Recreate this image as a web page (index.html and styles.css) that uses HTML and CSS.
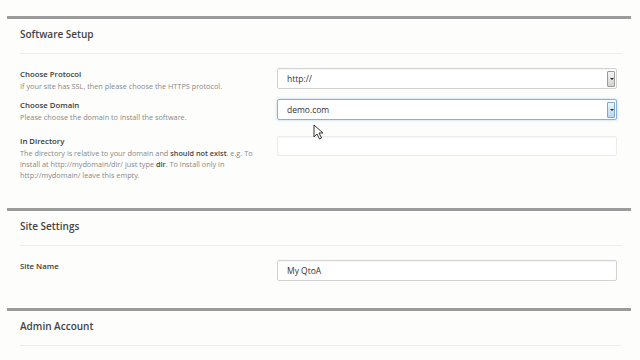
FILE: index.html
```html
<!DOCTYPE html>
<html lang="en">
<head>
  <meta charset="UTF-8">
  <title>Software Setup</title>
  <link rel="stylesheet" href="styles.css">
</head>
<body>
  <div class="wrap">

    <div class="section">
      <h3 class="section-head">Software Setup</h3>
      <div class="fields">
        <div class="row">
          <div class="label">
            <p class="title">Choose Protocol</p>
            <p class="desc">If your site has SSL, then please choose the HTTPS protocol.</p>
          </div>
          <div class="select">
            <span class="value">http://</span>
            <span class="arrow"></span>
          </div>
        </div>
        <div class="row tall">
          <div class="label">
            <p class="title">Choose Domain</p>
            <p class="desc">Please choose the domain to install the software.</p>
          </div>
          <div class="select focus">
            <span class="value">demo.com</span>
            <span class="arrow"></span>
          </div>
        </div>
        <div class="row">
          <div class="label">
            <p class="title">In Directory</p>
            <p class="desc">The directory is relative to your domain and <b>should not exist</b>. e.g. To install at http://mydomain/dir/ just type <b>dir</b>. To install only in http://mydomain/ leave this empty.</p>
          </div>
          <div class="input faint"></div>
        </div>
      </div>
    </div>

    <div class="section">
      <h3 class="section-head">Site Settings</h3>
      <div class="fields">
        <div class="row">
          <div class="label">
            <p class="title">Site Name</p>
          </div>
          <div class="input"><span class="value">My QtoA</span></div>
        </div>
      </div>
    </div>

    <div class="section">
      <h3 class="section-head">Admin Account</h3>
      <div class="fields">
        <div class="row">
          <div class="label"></div>
          <div class="input"></div>
        </div>
      </div>
    </div>

  </div>

  <svg class="cursor" width="11" height="16" viewBox="0 0 11 16">
    <path d="M1 1 L1 13 L4 10 L6.5 15 L8.5 14 L6 9 L10 9 Z" fill="#fff" stroke="#333" stroke-width="1" stroke-linejoin="round"/>
  </svg>
</body>
</html>
```

FILE: styles.css
```css
body {
  margin: 0;
  background: #fdfdfc;
  font-family: "Open Sans", Arial, sans-serif;
  color: #333;
  overflow: hidden;
}

p, h3 {
  margin: 0;
}

.wrap {
  width: 624px;
  margin: 16px 0 0 7px;
}

.section {
  border-top: 3px solid #9b9b9b;
  padding: 0 10px 0 13px;
}

.section-head {
  font-size: 10px;
  font-weight: 600;
  line-height: 15px;
  color: #444;
  padding: 8px 0 11px;
  border-bottom: 1px solid #ececec;
}

.fields {
  padding: 14px 0 20px;
}

.row {
  display: flex;
  align-items: flex-start;
  margin-bottom: 7px;
}

.row.tall {
  margin-bottom: 12px;
}

.label {
  width: 257px;
  min-height: 12px;
}

.title {
  font-size: 7.8px;
  font-weight: 600;
  line-height: 12px;
  color: #3a3a3a;
}

.desc {
  font-size: 7.3px;
  line-height: 11px;
  color: #888;
  margin-top: 1px;
  padding-right: 14px;
}

.desc b {
  font-weight: 600;
  color: #444;
}

.select, .input {
  width: 340px;
  height: 21px;
  box-sizing: border-box;
  border: 1px solid #d2d2d2;
  border-radius: 2px;
  background: #fff;
  display: flex;
  align-items: center;
  justify-content: space-between;
  padding: 0 1px 0 9px;
  box-shadow: inset 0 1px 1px rgba(0, 0, 0, 0.04);
}

.input.faint {
  border-color: #ececec;
  height: 20px;
  margin-top: 1px;
}

.value {
  font-size: 8.5px;
  color: #333;
}

.select.focus {
  border-color: #88b2d8;
  box-shadow: 0 0 3px rgba(100, 160, 220, 0.45);
}

.arrow {
  width: 8px;
  height: 16px;
  box-sizing: border-box;
  border: 1px solid #9a9a9a;
  border-radius: 1px;
  background: linear-gradient(#f4f4f4, #d4d4d4);
  position: relative;
}

.arrow::after {
  content: "";
  position: absolute;
  left: 1.5px;
  top: 6px;
  border-left: 2px solid transparent;
  border-right: 2px solid transparent;
  border-top: 2px solid #222;
}

.focus .arrow {
  border-color: #7fa6cc;
  background: linear-gradient(#eef5fc, #b9d6f0);
}

.cursor {
  position: absolute;
  left: 313px;
  top: 124px;
}
```
